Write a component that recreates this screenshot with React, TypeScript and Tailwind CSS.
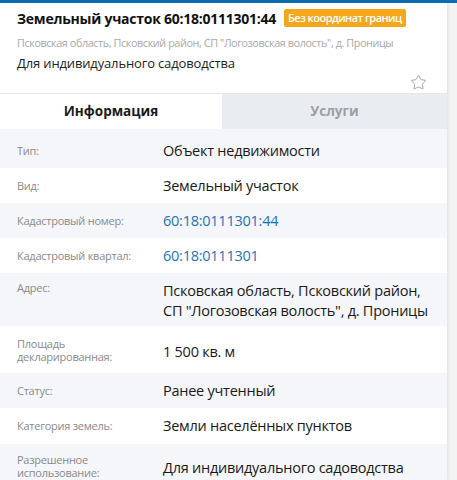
import React from 'react';
import { Star } from 'lucide-react';

type Row = {
  label: string[];
  value: string[];
  link?: boolean;
  shaded: boolean;
  h: string;
  top?: boolean;
};

const rows: Row[] = [
  { label: ['Тип:'], value: ['Объект недвижимости'], shaded: true, h: 'h-[39px] pt-[4px]' },
  { label: ['Вид:'], value: ['Земельный участок'], shaded: false, h: 'h-[35px]' },
  { label: ['Кадастровый номер:'], value: ['60:18:0111301:44'], link: true, shaded: true, h: 'h-[35px]' },
  { label: ['Кадастровый квартал:'], value: ['60:18:0111301'], link: true, shaded: false, h: 'h-[35px]' },
  {
    label: ['Адрес:'],
    value: ['Псковская область, Псковский район,', 'СП "Логозовская волость", д. Проницы'],
    shaded: true,
    h: 'h-[53px]',
    top: true,
  },
  { label: ['Площадь', 'декларированная:'], value: ['1 500 кв. м'], shaded: false, h: 'h-[47px] pt-[4px]' },
  { label: ['Статус:'], value: ['Ранее учтенный'], shaded: true, h: 'h-[35px]' },
  { label: ['Категория земель:'], value: ['Земли населённых пунктов'], shaded: false, h: 'h-[36px]' },
  { label: ['Разрешенное', 'использование:'], value: ['Для индивидуального садоводства'], shaded: true, h: 'h-[47px]' },
];

export default function App() {
  return (
    <div className="w-[457px] h-[480px] overflow-hidden bg-[#f3f3f3] font-['Open_Sans',sans-serif]">
      <div className="h-[3px] bg-[#0b6cb4]" />
      <div className="flex h-[477px]">
        <div className="w-[447px] shrink-0 bg-white shadow-[1px_0_3px_rgba(0,0,0,0.08)] flex flex-col">
          {/* header */}
          <div className="shrink-0 px-[17px] pt-[5px] h-[91px] border-b border-[#e8e8e8] relative">
            <div className="flex items-center gap-[8px] h-[20px]">
              <span className="text-[14px] font-bold text-[#111] tracking-[-0.25px] whitespace-nowrap">
                Земельный участок 60:18:0111301:44
              </span>
              <span className="bg-[#f4a71b] text-white text-[11px] font-semibold leading-[18px] px-[4px] rounded-[2px] tracking-[-0.55px] whitespace-nowrap">
                Без координат границ
              </span>
            </div>
            <div className="mt-[7px] text-[10.8px] leading-[16px] text-[#a8a8a8] tracking-[-0.4px] whitespace-nowrap">
              Псковская область, Псковский район, СП "Логозовская волость", д. Проницы
            </div>
            <div className="mt-[3px] text-[13px] leading-[18px] text-[#222] tracking-[-0.15px]">
              Для индивидуального садоводства
            </div>
            <div className="absolute right-[20px] top-[71px] text-[#a4a4a4]">
              <Star size={17} strokeWidth={1.4} />
            </div>
          </div>

          {/* tabs */}
          <div className="shrink-0 flex h-[35px]">
            <div className="w-[222px] bg-white flex items-center justify-center text-[13.5px] font-bold text-[#1a1a1a]">
              Информация
            </div>
            <div className="flex-1 bg-[#e9edf2] flex items-center justify-center text-[13.5px] font-bold text-[#9aa0a8]">
              Услуги
            </div>
          </div>

          {/* rows */}
          <div className="flex flex-col">
            {rows.map((r, i) => (
              <div
                key={i}
                className={`shrink-0 flex ${r.top ? 'items-start pt-[8px]' : 'items-center'} ${r.h} ${
                  r.shaded ? 'bg-[#f4f6f9]' : 'bg-white'
                }`}
              >
                <div
                  className={`w-[163px] shrink-0 pl-[17px] text-[11px] leading-[13.5px] text-[#8a8a8a] tracking-[-0.25px] ${
                    r.label.length > 1 ? 'mb-[3px]' : ''
                  }`}
                >
                  {r.label.map((l) => (
                    <div key={l}>{l}</div>
                  ))}
                </div>
                <div
                  className={`text-[14.5px] leading-[20px] tracking-[-0.25px] whitespace-nowrap ${
                    r.link ? 'text-[#1f73b7]' : 'text-[#1a1a1a]'
                  }`}
                >
                  {r.value.map((v) => (
                    <div key={v}>{v}</div>
                  ))}
                </div>
              </div>
            ))}
          </div>
        </div>
        <div className="flex-1" />
      </div>
    </div>
  );
}
